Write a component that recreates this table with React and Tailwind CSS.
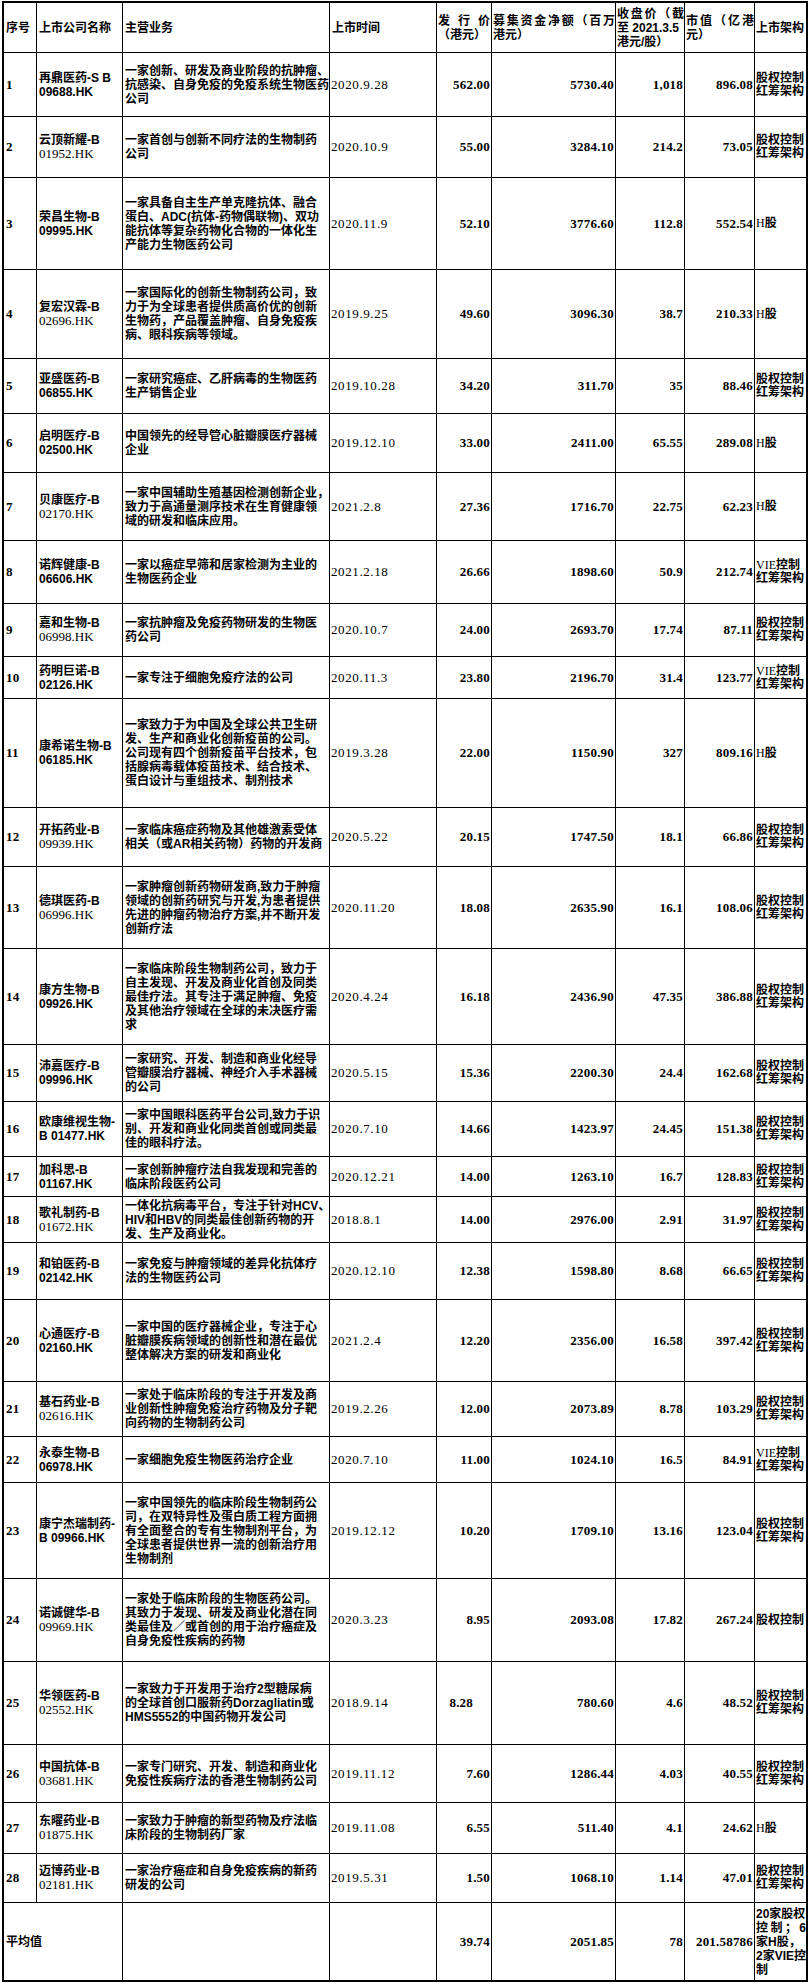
import React from "react";

const GRID = "grid grid-cols-[33px_86px_207px_107px_55px_124px_69px_70px_51px]";
const CJK = "font-['Liberation_Sans','Noto_Sans_CJK_SC',sans-serif]";
const NUM = "font-['Liberation_Serif','Noto_Sans_CJK_SC',serif]";
const CELL = "border-r border-black flex flex-col justify-center whitespace-nowrap";
const NUMTXT = `${NUM} text-[13px] font-bold tracking-[0.2px]`;

const rows = [
  { n: "1", name: "再鼎医药-S B", code: "09688.HK", bold: true, biz: ["一家创新、研发及商业阶段的抗肿瘤、", "抗感染、自身免疫的免疫系统生物医药", "公司"], date: "2020.9.28", price: "562.00", raise: "5730.40", close: "1,018", cap: "896.08", arch: "eq", h: "h-[64px]" },
  { n: "2", name: "云顶新耀-B", code: "01952.HK", bold: false, biz: ["一家首创与创新不同疗法的生物制药", "公司"], date: "2020.10.9", price: "55.00", raise: "3284.10", close: "214.2", cap: "73.05", arch: "eq", h: "h-[61px]" },
  { n: "3", name: "荣昌生物-B", code: "09995.HK", bold: true, biz: ["一家具备自主生产单克隆抗体、融合", "蛋白、ADC(抗体-药物偶联物)、双功", "能抗体等复杂药物化合物的一体化生", "产能力生物医药公司"], date: "2020.11.9", price: "52.10", raise: "3776.60", close: "112.8", cap: "552.54", arch: "h", h: "h-[92px]" },
  { n: "4", name: "复宏汉霖-B", code: "02696.HK", bold: false, biz: ["一家国际化的创新生物制药公司，致", "力于为全球患者提供质高价优的创新", "生物药，产品覆盖肿瘤、自身免疫疾", "病、眼科疾病等领域。"], date: "2019.9.25", price: "49.60", raise: "3096.30", close: "38.7", cap: "210.33", arch: "h", h: "h-[89px]" },
  { n: "5", name: "亚盛医药-B", code: "06855.HK", bold: true, biz: ["一家研究癌症、乙肝病毒的生物医药", "生产销售企业"], date: "2019.10.28", price: "34.20", raise: "311.70", close: "35", cap: "88.46", arch: "eq", h: "h-[55px]" },
  { n: "6", name: "启明医疗-B", code: "02500.HK", bold: true, biz: ["中国领先的经导管心脏瓣膜医疗器械", "企业"], date: "2019.12.10", price: "33.00", raise: "2411.00", close: "65.55", cap: "289.08", arch: "h", h: "h-[59px]" },
  { n: "7", name: "贝康医疗-B", code: "02170.HK", bold: false, biz: ["一家中国辅助生殖基因检测创新企业，", "致力于高通量测序技术在生育健康领", "域的研发和临床应用。"], date: "2021.2.8", price: "27.36", raise: "1716.70", close: "22.75", cap: "62.23", arch: "h", h: "h-[68px]" },
  { n: "8", name: "诺辉健康-B", code: "06606.HK", bold: true, biz: ["一家以癌症早筛和居家检测为主业的", "生物医药企业"], date: "2021.2.18", price: "26.66", raise: "1898.60", close: "50.9", cap: "212.74", arch: "vie", h: "h-[63px]" },
  { n: "9", name: "嘉和生物-B", code: "06998.HK", bold: false, biz: ["一家抗肿瘤及免疫药物研发的生物医", "药公司"], date: "2020.10.7", price: "24.00", raise: "2693.70", close: "17.74", cap: "87.11", arch: "eq", h: "h-[53px]" },
  { n: "10", name: "药明巨诺-B", code: "02126.HK", bold: true, biz: ["一家专注于细胞免疫疗法的公司"], date: "2020.11.3", price: "23.80", raise: "2196.70", close: "31.4", cap: "123.77", arch: "vie", h: "h-[42px]" },
  { n: "11", name: "康希诺生物-B", code: "06185.HK", bold: true, biz: ["一家致力于为中国及全球公共卫生研", "发、生产和商业化创新疫苗的公司。", "公司现有四个创新疫苗平台技术，包", "括腺病毒载体疫苗技术、结合技术、", "蛋白设计与重组技术、制剂技术"], date: "2019.3.28", price: "22.00", raise: "1150.90", close: "327", cap: "809.16", arch: "h", h: "h-[109px]" },
  { n: "12", name: "开拓药业-B", code: "09939.HK", bold: false, biz: ["一家临床癌症药物及其他雄激素受体", "相关（或AR相关药物）药物的开发商"], date: "2020.5.22", price: "20.15", raise: "1747.50", close: "18.1", cap: "66.86", arch: "eq", h: "h-[59px]" },
  { n: "13", name: "德琪医药-B", code: "06996.HK", bold: false, biz: ["一家肿瘤创新药物研发商,致力于肿瘤", "领域的创新药研究与开发,为患者提供", "先进的肿瘤药物治疗方案,并不断开发", "创新疗法"], date: "2020.11.20", price: "18.08", raise: "2635.90", close: "16.1", cap: "108.06", arch: "eq", h: "h-[82px]" },
  { n: "14", name: "康方生物-B", code: "09926.HK", bold: true, biz: ["一家临床阶段生物制药公司，致力于", "自主发现、开发及商业化首创及同类", "最佳疗法。其专注于满足肿瘤、免疫", "及其他治疗领域在全球的未决医疗需", "求"], date: "2020.4.24", price: "16.18", raise: "2436.90", close: "47.35", cap: "386.88", arch: "eq", h: "h-[96px]" },
  { n: "15", name: "沛嘉医疗-B", code: "09996.HK", bold: true, biz: ["一家研究、开发、制造和商业化经导", "管瓣膜治疗器械、神经介入手术器械", "的公司"], date: "2020.5.15", price: "15.36", raise: "2200.30", close: "24.4", cap: "162.68", arch: "eq", h: "h-[57px]" },
  { n: "16", name: "欧康维视生物-", code: "B 01477.HK", bold: true, biz: ["一家中国眼科医药平台公司,致力于识", "别、开发和商业化同类首创或同类最", "佳的眼科疗法。"], date: "2020.7.10", price: "14.66", raise: "1423.97", close: "24.45", cap: "151.38", arch: "eq", h: "h-[55px]" },
  { n: "17", name: "加科思-B", code: "01167.HK", bold: true, biz: ["一家创新肿瘤疗法自我发现和完善的", "临床阶段医药公司"], date: "2020.12.21", price: "14.00", raise: "1263.10", close: "16.7", cap: "128.83", arch: "eq", h: "h-[40px]" },
  { n: "18", name: "歌礼制药-B", code: "01672.HK", bold: false, biz: ["一体化抗病毒平台，专注于针对HCV、", "HIV和HBV的同类最佳创新药物的开", "发、生产及商业化。"], date: "2018.8.1", price: "14.00", raise: "2976.00", close: "2.91", cap: "31.97", arch: "eq", h: "h-[46px]" },
  { n: "19", name: "和铂医药-B", code: "02142.HK", bold: true, biz: ["一家免疫与肿瘤领域的差异化抗体疗", "法的生物医药公司"], date: "2020.12.10", price: "12.38", raise: "1598.80", close: "8.68", cap: "66.65", arch: "eq", h: "h-[57px]" },
  { n: "20", name: "心通医疗-B", code: "02160.HK", bold: true, biz: ["一家中国的医疗器械企业，专注于心", "脏瓣膜疾病领域的创新性和潜在最优", "整体解决方案的研发和商业化"], date: "2021.2.4", price: "12.20", raise: "2356.00", close: "16.58", cap: "397.42", arch: "eq", h: "h-[82px]" },
  { n: "21", name: "基石药业-B", code: "02616.HK", bold: false, biz: ["一家处于临床阶段的专注于开发及商", "业创新性肿瘤免疫治疗药物及分子靶", "向药物的生物制药公司"], date: "2019.2.26", price: "12.00", raise: "2073.89", close: "8.78", cap: "103.29", arch: "eq", h: "h-[55px]" },
  { n: "22", name: "永泰生物-B", code: "06978.HK", bold: true, biz: ["一家细胞免疫生物医药治疗企业"], date: "2020.7.10", price: "11.00", raise: "1024.10", close: "16.5", cap: "84.91", arch: "vie", h: "h-[46px]" },
  { n: "23", name: "康宁杰瑞制药-", code: "B 09966.HK", bold: true, biz: ["一家中国领先的临床阶段生物制药公", "司，在双特异性及蛋白质工程方面拥", "有全面整合的专有生物制剂平台，为", "全球患者提供世界一流的创新治疗用", "生物制剂"], date: "2019.12.12", price: "10.20", raise: "1709.10", close: "13.16", cap: "123.04", arch: "eq", h: "h-[96px]" },
  { n: "24", name: "诺诚健华-B", code: "09969.HK", bold: false, biz: ["一家处于临床阶段的生物医药公司。", "其致力于发现、研发及商业化潜在同", "类最佳及／或首创的用于治疗癌症及", "自身免疫性疾病的药物"], date: "2020.3.23", price: "8.95", raise: "2093.08", close: "17.82", cap: "267.24", arch: "eq1", h: "h-[83px]" },
  { n: "25", name: "华领医药-B", code: "02552.HK", bold: false, biz: ["一家致力于开发用于治疗2型糖尿病", "的全球首创口服新药Dorzagliatin或", "HMS5552的中国药物开发公司"], date: "2018.9.14", price: "8.28", pricePad: true, raise: "780.60", close: "4.6", cap: "48.52", arch: "eq", h: "h-[83px]" },
  { n: "26", name: "中国抗体-B", code: "03681.HK", bold: false, biz: ["一家专门研究、开发、制造和商业化", "免疫性疾病疗法的香港生物制药公司"], date: "2019.11.12", price: "7.60", raise: "1286.44", close: "4.03", cap: "40.55", arch: "eq", h: "h-[58px]" },
  { n: "27", name: "东曜药业-B", code: "01875.HK", bold: false, biz: ["一家致力于肿瘤的新型药物及疗法临", "床阶段的生物制药厂家"], date: "2019.11.08", price: "6.55", raise: "511.40", close: "4.1", cap: "24.62", arch: "h", h: "h-[51px]" },
  { n: "28", name: "迈博药业-B", code: "02181.HK", bold: false, biz: ["一家治疗癌症和自身免疫疾病的新药", "研发的公司"], date: "2019.5.31", price: "1.50", raise: "1068.10", close: "1.14", cap: "47.01", arch: "eq", h: "h-[49px]" },
];

function Justify({ text }) {
  return (
    <div className="flex justify-between">
      {[...text].map((c, i) => (
        <span key={i}>{c}</span>
      ))}
    </div>
  );
}

function Arch({ type }) {
  if (type === "h") {
    return (
      <div>
        <span className={`${NUM} font-normal`}>H</span>股
      </div>
    );
  }
  if (type === "vie") {
    return (
      <>
        <div>
          <span className={`${NUM} font-normal`}>VIE</span>控制
        </div>
        <div>红筹架构</div>
      </>
    );
  }
  if (type === "eq1") {
    return <div>股权控制</div>;
  }
  return (
    <>
      <div>股权控制</div>
      <div>红筹架构</div>
    </>
  );
}

function DataRow({ r }) {
  return (
    <div className={`${GRID} ${r.h} border-b border-black`}>
      <div className={`${CELL} pl-[2px] ${NUMTXT}`}>{r.n}</div>
      <div className={`${CELL} pl-[2px] ${CJK} text-[12px] leading-[14px] font-bold`}>
        <div>{r.name}</div>
        <div className={r.bold ? "font-['Liberation_Sans',sans-serif] font-bold" : `${NUM} font-normal text-[13px]`}>{r.code}</div>
      </div>
      <div className={`${CELL} pl-[2px] ${CJK} text-[12px] leading-[14px] font-bold`}>
        {r.biz.map((l, i) => (
          <div key={i}>{l}</div>
        ))}
      </div>
      <div className={`${CELL} pl-[1px] ${NUM} text-[13px] tracking-[0.6px]`}>{r.date}</div>
      <div className={`${CELL} items-end ${r.pricePad ? "pr-[18px]" : "pr-[1px]"} ${NUMTXT}`}>{r.price}</div>
      <div className={`${CELL} items-end pr-[1px] ${NUMTXT}`}>{r.raise}</div>
      <div className={`${CELL} items-end pr-[1px] ${NUMTXT}`}>{r.close}</div>
      <div className={`${CELL} items-end pr-[1px] ${NUMTXT}`}>{r.cap}</div>
      <div className={`flex flex-col justify-center whitespace-nowrap pl-[1px] ${CJK} text-[12px] leading-[13px] font-bold`}>
        <Arch type={r.arch} />
      </div>
    </div>
  );
}

export default function App() {
  return (
    <div className="bg-white text-black w-[810px] min-h-[1987px] pt-[1px] pl-[2px]">
      <div className="w-[806px] border-2 border-black">
        <div className={`${GRID} h-[50px] border-b border-black ${CJK} text-[12px] leading-[14px] font-bold`}>
          <div className={`${CELL} pl-[2px]`}>序号</div>
          <div className={`${CELL} pl-[2px]`}>上市公司名称</div>
          <div className={`${CELL} pl-[2px]`}>主营业务</div>
          <div className={`${CELL} pl-[2px]`}>上市时间</div>
          <div className={`${CELL} px-[1px]`}>
            <Justify text="发行价" />
            <div>（港元）</div>
          </div>
          <div className={`${CELL} pl-[1px]`}>
            <Justify text="募集资金净额（百万" />
            <div>港元）</div>
          </div>
          <div className={`${CELL} pl-[1px] leading-[14px]`}>
            <Justify text="收盘价（截" />
            <div>至 2021.3.5</div>
            <div>港元/股）</div>
          </div>
          <div className={`${CELL} pl-[1px]`}>
            <Justify text="市值（亿港" />
            <div>元）</div>
          </div>
          <div className="flex flex-col justify-center whitespace-nowrap pl-[1px]">上市架构</div>
        </div>
        {rows.map((r) => (
          <DataRow key={r.n} r={r} />
        ))}
        <div className={`${GRID} h-[77px]`}>
          <div className={`${CELL} col-span-2 pl-[2px] ${CJK} text-[12px] font-bold`}>平均值</div>
          <div className={CELL}></div>
          <div className={CELL}></div>
          <div className={`${CELL} items-end pr-[1px] ${NUMTXT}`}>39.74</div>
          <div className={`${CELL} items-end pr-[1px] ${NUMTXT}`}>2051.85</div>
          <div className={`${CELL} items-end pr-[1px] ${NUMTXT}`}>78</div>
          <div className={`${CELL} items-end pr-[1px] ${NUMTXT}`}>201.58786</div>
          <div className={`flex flex-col justify-center whitespace-nowrap pl-[1px] ${CJK} text-[12px] leading-[14px] font-bold`}>
            <div>20家股权</div>
            <Justify text="控制；6" />
            <div>家H股，</div>
            <div>2家VIE控</div>
            <div>制</div>
          </div>
        </div>
      </div>
    </div>
  );
}
